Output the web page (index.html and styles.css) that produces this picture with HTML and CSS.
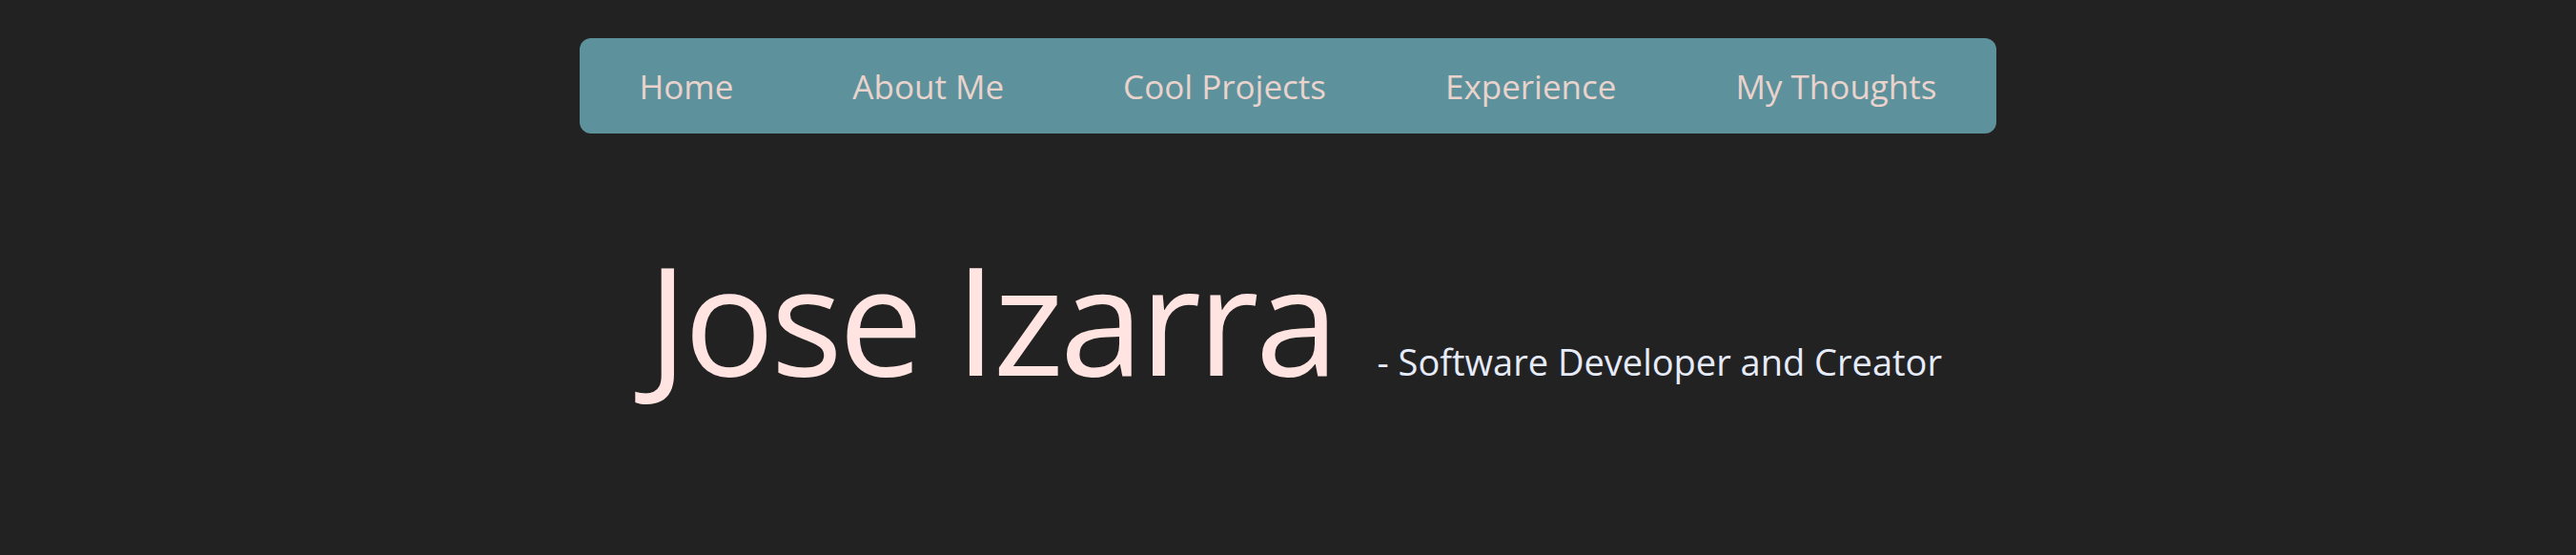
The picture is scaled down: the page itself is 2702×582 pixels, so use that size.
FILE: index.html
```html
<!DOCTYPE html>
<html lang="en">
<head>
<meta charset="utf-8">
<title>Jose Izarra</title>
<link rel="stylesheet" href="styles.css">
</head>
<body>
<nav class="nav">
  <a class="nav-link" href="#">Home</a>
  <a class="nav-link" href="#">About Me</a>
  <a class="nav-link" href="#">Cool Projects</a>
  <a class="nav-link" href="#">Experience</a>
  <a class="nav-link" href="#">My Thoughts</a>
</nav>
<header class="hero">
  <h1 class="hero-name">Jose Izarra</h1>
  <p class="hero-role">- Software Developer and Creator</p>
</header>
</body>
</html>
```
FILE: styles.css
```css
html, body {
  margin: 0;
  padding: 0;
}
body {
  background: #222222;
  font-family: "Open Sans", "Noto Sans", sans-serif;
  min-height: 100vh;
}
.nav {
  width: 55%;
  height: 100px;
  margin: 40px auto 0;
  background: #5d929c;
  border-radius: 12px;
  display: flex;
  justify-content: space-around;
  align-items: center;
}
.nav-link {
  color: #e9d3cc;
  text-decoration: none;
  font-size: 35px;
  line-height: 1;
}
.hero {
  display: flex;
  justify-content: center;
  align-items: baseline;
  gap: 44px;
  margin-top: 114px;
  padding-left: 14px;
}
.hero-name {
  margin: 0;
  font-size: 158px;
  font-weight: 400;
  line-height: 1;
  letter-spacing: -4px;
  color: #ffe4e1;
}
.hero-role {
  margin: 0;
  font-size: 38px;
  line-height: 1;
  color: #e6ebfa;
}
```
